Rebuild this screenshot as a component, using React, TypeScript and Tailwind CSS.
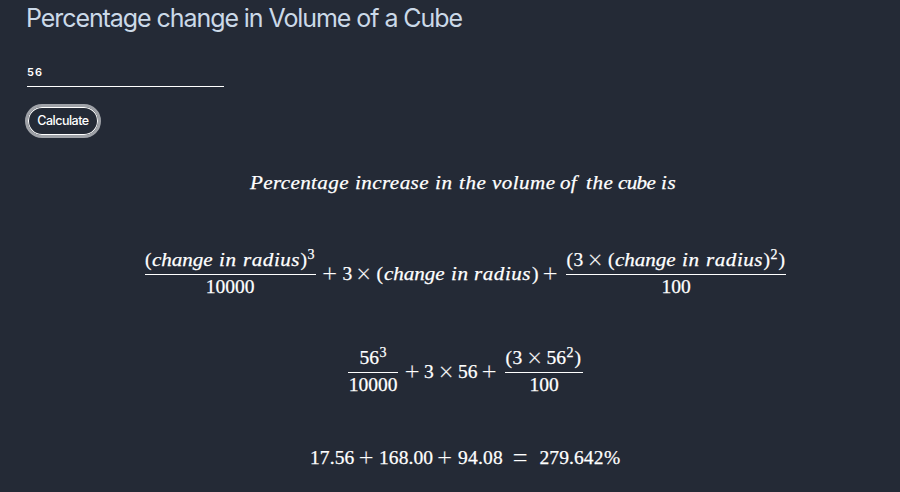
import type { ReactNode } from "react";

function W({ c, children }: { c: string; children: ReactNode }) {
  return <span className={`inline-block shrink-0 whitespace-nowrap ${c}`}>{children}</span>;
}

// Italic word, slightly widened as in mathematical typesetting.
function V({ c, children }: { c: string; children: ReactNode }) {
  return (
    <span className={`inline-block shrink-0 whitespace-nowrap ${c}`}>
      <span className="inline-block origin-left scale-x-[1.08]">{children}</span>
    </span>
  );
}

function Op({ c, children }: { c: string; children: ReactNode }) {
  return (
    <span
      className={`-ml-[0.5px] mr-[0.5px] inline-block shrink-0 text-[27px] leading-[22px] [-webkit-text-stroke:0.2px_#242a36] ${c}`}
    >
      {children}
    </span>
  );
}

function Phrase() {
  return (
    <span className="flex shrink-0 italic">
      <V c="w-[67px] tracking-[-0.05px]">change</V>
      <V c="w-[23.5px] tracking-[0.7px]">in</V>
      <V c="w-[58px] tracking-[0.5px]">radius</V>
    </span>
  );
}

function Frac({ c, top, bottom }: { c: string; top: ReactNode; bottom: string }) {
  return (
    <div className={`flex shrink-0 flex-col ${c}`}>
      <div className="flex h-[26px] border-b border-white pl-[0.5px]">{top}</div>
      <div className="mt-px text-center">{bottom}</div>
    </div>
  );
}

export default function App() {
  return (
    <main className="h-[492px] w-[900px] overflow-hidden bg-[#242a36] text-white">
      <h1 className="h-[66px] whitespace-nowrap pl-[26px] pt-[2px] font-['Inter',sans-serif] text-[25px] leading-[32px] tracking-[-1.07px] text-[#cbd9e8]">
        Percentage change in Volume of a Cube
      </h1>
      <input
        defaultValue="56"
        aria-label="Percentage change"
        className="ml-[27px] block h-[21px] w-[197px] border-b border-white bg-transparent pb-[9px] font-['Inter',sans-serif] text-[11px] font-semibold leading-[12px] tracking-[1.1px] outline-none"
      />
      <button className="ml-[25px] mt-[17px] block h-[34px] w-[76px] whitespace-nowrap rounded-full border-[3px] border-[#9fa2a8] font-['Inter',sans-serif] text-[12.5px] font-medium leading-[26px] tracking-[-0.5px] ring-1 ring-inset ring-white">
        Calculate
      </button>
      <section className="font-['Liberation_Serif',serif] text-[19.5px] leading-[22px] [-webkit-text-stroke:0.25px_white]">
        <div className="mt-[34px] flex pl-[250px] italic">
          <V c="w-[105px] tracking-[0.35px]">Percentage</V>
          <V c="w-[80px] tracking-[0.4px]">increase</V>
          <V c="w-[23.5px] tracking-[0.7px]">in</V>
          <V c="w-[33px] tracking-[0.5px]">the</V>
          <V c="w-[68.5px] tracking-[0.4px]">volume</V>
          <V c="w-[25.5px] tracking-[0.3px]">of</V>
          <V c="w-[32.5px] tracking-[0.5px]">the</V>
          <V c="w-[43px] tracking-[-0.6px]">cube</V>
          <V c="w-[18px] tracking-[0.5px]">is</V>
        </div>
        <div className="mt-[55px] flex h-[52px] pl-[144.5px]">
          <Frac
            c="w-[171px]"
            bottom="10000"
            top={
              <>
                <W c="w-[7px]">(</W>
                <Phrase />
                <W c="w-[7px]">)</W>
                <W c="-mt-[5px] text-[14px]">3</W>
              </>
            }
          />
          <div className="flex pt-[14px]">
            <Op c="ml-[6.5px] w-[20px]">+</Op>
            <W c="w-[14px]">3</W>
            <Op c="w-[20px]">×</Op>
            <W c="w-[7px]">(</W>
            <Phrase />
            <W c="w-[11px]">)</W>
            <Op c="w-[23px]">+</Op>
          </div>
          <Frac
            c="w-[220px]"
            bottom="100"
            top={
              <>
                <W c="w-[7px]">(</W>
                <W c="w-[14.5px]">3</W>
                <Op c="w-[20px]">×</Op>
                <W c="w-[7px]">(</W>
                <Phrase />
                <W c="w-[7px]">)</W>
                <W c="-mt-[5px] w-[8px] text-[14px]">2</W>
                <W c="w-[7px]">)</W>
              </>
            }
          />
        </div>
        <div className="mt-[46px] flex h-[52px] pl-[348px]">
          <Frac
            c="w-[50px]"
            bottom="10000"
            top={
              <>
                <W c="ml-[11px] w-[20px]">56</W>
                <W c="-mt-[5px] text-[14px]">3</W>
              </>
            }
          />
          <div className="flex pt-[14px]">
            <Op c="ml-[6.5px] w-[19px]">+</Op>
            <W c="w-[15px]">3</W>
            <Op c="w-[19px]">×</Op>
            <W c="w-[24px]">56</W>
            <Op c="w-[23px]">+</Op>
          </div>
          <Frac
            c="w-[78px]"
            bottom="100"
            top={
              <>
                <W c="w-[7px]">(</W>
                <W c="w-[15px]">3</W>
                <Op c="w-[19px]">×</Op>
                <W c="w-[20px]">56</W>
                <W c="-mt-[5px] w-[8px] text-[14px]">2</W>
                <W c="w-[7px]">)</W>
              </>
            }
          />
        </div>
        <div className="mt-[48px] flex pl-[310px]">
          <W c="w-[49px] tracking-[0.1px]">17.56</W>
          <Op c="w-[20px]">+</Op>
          <W c="w-[58.5px] tracking-[0.1px]">168.00</W>
          <Op c="w-[20.5px]">+</Op>
          <W c="w-[55px] tracking-[0.2px]">94.08</W>
          <Op c="w-[26.5px]">=</Op>
          <W c="w-[64.5px] tracking-[0.1px]">279.642</W>
          <W c="">%</W>
        </div>
      </section>
    </main>
  );
}
